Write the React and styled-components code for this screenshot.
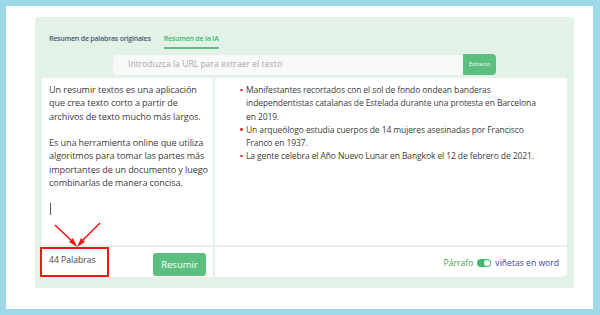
import styled, { createGlobalStyle } from "styled-components";

const Global = createGlobalStyle`
  html, body { margin: 0; padding: 0; }
  body { font-family: "Open Sans", "Noto Sans", sans-serif; background: #fff; }
`;

const Frame = styled.div`
  position: relative;
  box-sizing: border-box;
  width: 600px;
  height: 315px;
  border: solid #9dd9e9;
  border-width: 6px 7px 6px 6px;
  background: #fff;
  padding: 11px 0 0 29px;
`;

const Panel = styled.div`
  box-sizing: border-box;
  width: 539px;
  height: 271px;
  background: #e2f2e7;
  border-radius: 3px;
  padding: 0 7px 0 7px;
  display: flex;
  flex-direction: column;
`;

const Tabs = styled.div`
  display: flex;
  gap: 13px;
  padding: 17px 0 0 7px;
  height: 15px;
`;

const Tab = styled.div`
  font-size: 7px;
  font-weight: 600;
  letter-spacing: -0.2px;
  color: ${(p) => (p.$active ? "#3fb56b" : "#4b5874")};
  border-bottom: 2px solid ${(p) => (p.$active ? "#5cc084" : "transparent")};
  height: 13px;
  line-height: 10px;
`;

const UrlRow = styled.div`
  display: flex;
  margin: 6px 0 0 71px;
  height: 20px;
`;

const UrlInput = styled.div`
  width: 350px;
  background: #f8faf9;
  border-radius: 4px 0 0 4px;
  font-size: 8.6px;
  color: #a9a9a9;
  line-height: 19px;
  padding-left: 15px;
  box-sizing: border-box;
`;

const ExtractBtn = styled.div`
  width: 33px;
  background: #5bbf80;
  border-radius: 0 4px 4px 0;
  color: #fff;
  font-size: 5.5px;
  text-align: center;
  line-height: 20px;
  margin-top: -1px;
`;

const Columns = styled.div`
  display: flex;
  gap: 2px;
  margin-top: 3px;
  height: 199px;
`;

const Col = styled.div`
  background: #fff;
  width: ${(p) => p.$w}px;
  display: flex;
  flex-direction: column;
  border-radius: ${(p) => (p.$right ? "0 0 5px 0" : "0")};
`;

const Body = styled.div`
  flex: 1;
  padding: 5px 2px 0 7px;
  font-size: 9.1px;
  letter-spacing: -0.1px;
  line-height: 13.3px;
  color: #3c3c3c;
  p { margin: 0 0 13.3px 0; }
`;

const Caret = styled.div`
  width: 1px;
  height: 12px;
  background: #555;
  margin: 14px 0 0 1px;
`;

const Bullets = styled.ul`
  margin: 0;
  padding: 5px 22px 0 31px;
  font-size: 8.5px;
  line-height: 13.3px;
  color: #3c3c3c;
  list-style: none;
  li { position: relative; }
  li::before {
    content: "";
    position: absolute;
    left: -6px;
    top: 5.5px;
    width: 2.5px;
    height: 2.5px;
    border-radius: 50%;
    background: #e53b3b;
  }
`;

const Footer = styled.div`
  height: 30px;
  border-top: 2px solid #e8f1ec;
  display: flex;
  align-items: center;
  justify-content: ${(p) => (p.$end ? "flex-end" : "space-between")};
  padding: 0 ${(p) => (p.$end ? "8px" : "7px")} 0 7px;
  gap: 4px;
`;

const Count = styled.div`
  font-size: 8.6px;
  color: #444;
  margin-top: -5px;
`;

const ResumirBtn = styled.div`
  width: 53px;
  height: 23px;
  background: #5bbf80;
  border-radius: 3px;
  color: #fff;
  font-size: 9.5px;
  line-height: 23px;
  text-align: center;
  margin-top: 4px;
`;

const Label = styled.span`
  font-size: 8.6px;
  font-weight: 500;
  color: ${(p) => p.$c};
  margin-top: 1px;
`;

const Toggle = styled.div`
  width: 14px;
  height: 8px;
  border-radius: 4px;
  background: #42b86c;
  position: relative;
  margin-top: 1px;
  &::after {
    content: "";
    position: absolute;
    right: 1px;
    top: 1px;
    width: 6px;
    height: 6px;
    border-radius: 50%;
    background: #fff;
  }
`;

const Highlight = styled.div`
  position: absolute;
  left: 34px;
  top: 241px;
  width: 65px;
  height: 26px;
  border: 2px solid #f01515;
`;

const Arrows = styled.svg`
  position: absolute;
  left: 0;
  top: 0;
  pointer-events: none;
`;

export default function App() {
  return (
    <>
      <Global />
      <Frame>
        <Panel>
          <Tabs>
            <Tab>Resumen de palabras originales</Tab>
            <Tab $active>Resumen de la IA</Tab>
          </Tabs>
          <UrlRow>
            <UrlInput>Introduzca la URL para extraer el texto</UrlInput>
            <ExtractBtn>Extracto</ExtractBtn>
          </UrlRow>
          <Columns>
            <Col $w={171}>
              <Body>
                <p>
                  Un resumir textos es una aplicación que crea texto corto a
                  partir de archivos de texto mucho más largos.
                </p>
                <p style={{ marginBottom: 0 }}>
                  Es una herramienta online que utiliza algoritmos para tomar
                  las partes más importantes de un documento y luego
                  combinarlas de manera concisa.
                </p>
                <Caret />
              </Body>
              <Footer>
                <Count>44 Palabras</Count>
                <ResumirBtn>Resumir</ResumirBtn>
              </Footer>
            </Col>
            <Col $w={352} $right>
              <Body style={{ padding: 0 }}>
                <Bullets>
                  <li>
                    Manifestantes recortados con el sol de fondo ondean banderas
                    independentistas catalanas de Estelada durante una protesta
                    en Barcelona en 2019.
                  </li>
                  <li>
                    Un arqueólogo estudia cuerpos de 14 mujeres asesinadas por
                    Francisco Franco en 1937.
                  </li>
                  <li>
                    La gente celebra el Año Nuevo Lunar en Bangkok el 12 de
                    febrero de 2021.
                  </li>
                </Bullets>
              </Body>
              <Footer $end>
                <Label $c="#3d9e3d">Párrafo</Label>
                <Toggle />
                <Label $c="#3b3f9e">viñetas en word</Label>
              </Footer>
            </Col>
          </Columns>
        </Panel>
        <Highlight />
        <Arrows width="600" height="315" viewBox="0 0 600 315">
          <g stroke="#f01515" strokeWidth="1.6" fill="#f01515">
            <line x1="49" y1="219" x2="69" y2="238" />
            <line x1="94" y1="217" x2="73" y2="238" />
          </g>
          <polygon points="71,241 63,236 67,232" fill="#f01515" />
          <polygon points="71,241 75,232 79,236" fill="#f01515" />
        </Arrows>
      </Frame>
    </>
  );
}
